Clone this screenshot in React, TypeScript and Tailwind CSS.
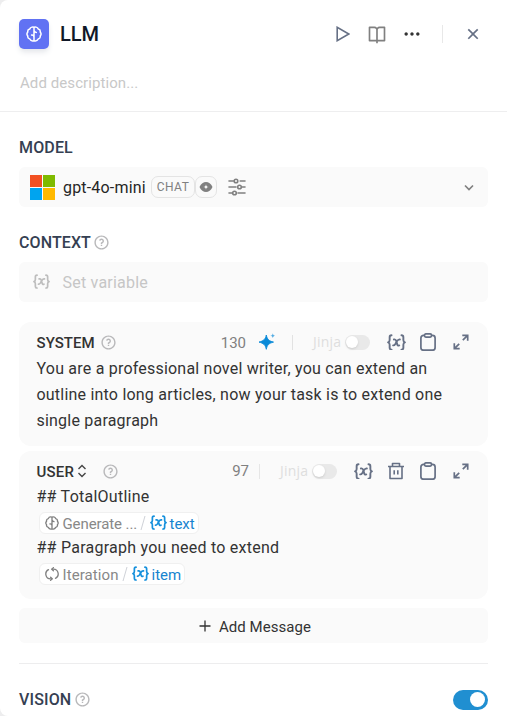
import type { ReactNode } from 'react';
import { RiBookOpenLine, RiMoreFill, RiCloseLine, RiQuestionLine } from 'react-icons/ri';

function Brain({ size, className = '' }: { size: number; className?: string }) {
  return (
    <svg width={size} height={size} viewBox="0 0 16 16" fill="none" stroke="currentColor" strokeWidth="1.5" strokeLinecap="round" strokeLinejoin="round" className={`shrink-0 ${className}`}>
      <path d="M8 1.200v13.600M8 1.300C6.200.7 4.300 1.500 3.800 3 2.300 3.400 1.500 4.700 1.800 6 .8 7.200.8 8.900 1.800 10c-.3 1.400.6 2.700 2 3 .7 1.500 2.500 2.200 4.200 1.700M8 1.300c1.800-.6 3.700.2 4.200 1.700 1.500.4 2.300 1.700 2 3 1 1.200 1 2.900 0 4 .3 1.400-.6 2.700-2 3-.7 1.500-2.500 2.200-4.200 1.700M8 4.500c.4 1.200 1.200 1.800 2.300 1.900M8 11c-.1-1.300-.9-2-2.400-1.900" />
    </svg>
  );
}

function Variable({ size, className = '' }: { size: number; className?: string }) {
  return (
    <svg width={size} height={(size * 16) / 18} viewBox="0 0 18 16" fill="none" stroke="currentColor" strokeWidth="1.8" strokeLinecap="round" strokeLinejoin="round" className={`shrink-0 ${className}`}>
      <path d="M4.300 1.200C2.900 1.200 2.500 1.800 2.500 3v2.800C2.500 7.200 2 7.800 1 8c1 .2 1.500.8 1.500 2.200V13c0 1.200.4 1.800 1.800 1.800M13.700 1.200c1.400 0 1.800.6 1.800 1.800v2.800c0 1.400.5 2 1.500 2.200-1 .2-1.500.8-1.500 2.200V13c0 1.200-.4 1.800-1.800 1.800" />
      <path d="M6.500 5.200c1.500-.4 2 .4 2.400 1.800l.7 2.500c.3 1.300.9 1.800 2 1.300M12.200 5.200c-1.300-.4-2 .4-3 1.900L7.900 9.400c-.7 1.100-1.200 1.600-2.100 1.400" />
    </svg>
  );
}

function Clipboard() {
  return (
    <svg width="16" height="18" viewBox="0 0 16 18" fill="none" stroke="currentColor" strokeWidth="1.7" strokeLinejoin="round">
      <path d="M4.500 2.400H3.600C2 2.400.9 3.400.9 5v9.500c0 1.700 1 2.700 2.700 2.700h8.800c1.700 0 2.700-1 2.700-2.700V5c0-1.600-1.100-2.600-2.700-2.600h-.9" />
      <rect x="4.500" y=".85" width="7" height="3.300" rx="1.300" />
    </svg>
  );
}

function Trash() {
  return (
    <svg width="18" height="18" viewBox="0 0 18 18" fill="none" stroke="currentColor" strokeWidth="1.6" strokeLinejoin="round">
      <path d="M1 4.500h16M3 4.500v12h12v-12M5.500 4.500V1.500h7v3M7.200 8.200v4.300M10.800 8.200v4.300" />
    </svg>
  );
}

function Expand() {
  return (
    <svg width="16" height="16" viewBox="0 0 16 16" fill="none" stroke="currentColor" strokeWidth="1.700">
      <path d="M9.300 1.300h5.400v5.400M14.400 1.600 9.800 6.200M6.700 14.700H1.300V9.300M1.600 14.400l4.600-4.600" />
    </svg>
  );
}

function Sparkle() {
  return (
    <svg width="18" height="18" viewBox="0 0 18 18" fill="#0a8ad8">
      <path d="M8.300 2c.9 4.300 2.500 5.900 7.200 7.100C10.800 10.300 9.200 12 8.300 16.300 7.400 12 5.700 10.300 1 9.100 5.700 7.900 7.400 6.300 8.300 2Z" stroke="#0a8ad8" strokeWidth=".9" strokeLinejoin="round" />
      <path d="M14.800.3c.3 1.600.8 2.100 2.400 2.400-1.600.3-2.100.8-2.400 2.400-.3-1.600-.8-2.100-2.400-2.400 1.600-.3 2.100-.8 2.400-2.400Z" opacity=".7" />
    </svg>
  );
}

function Loop() {
  return (
    <svg width="14" height="14" viewBox="0 0 14 14" fill="none" stroke="#808080" strokeWidth="1.300" strokeLinecap="round" strokeLinejoin="round" className="shrink-0">
      <path d="M7 11.800H5.500A4.800 4.800 0 0 1 3.500 2.700M7 2.200h1.500a4.800 4.800 0 0 1 2 9.100" />
      <path d="M5.600 10.200 7.200 11.800l-1.600 1.600M8.400.6 6.800 2.200l1.600 1.600" />
    </svg>
  );
}

function Help({ className = '' }: { className?: string }) {
  return <RiQuestionLine size={17} className={`shrink-0 text-[#b8b8ba] ${className}`} />;
}

function Jinja() {
  return (
    <div className="flex items-center gap-[3px]">
      <span className="w-[29px] whitespace-nowrap font-['Open_Sans',sans-serif] text-[14px] leading-4 tracking-[0.2px] text-[#dedede]">Jinja</span>
      <span className="flex h-[15px] w-[25px] items-center rounded-full bg-[#e9e9e9] px-[1px]">
        <span className="size-[12px] rounded-full bg-white shadow-sm" />
      </span>
    </div>
  );
}

function Slot({ children, className = '' }: { children: ReactNode; className?: string }) {
  return <button className={`flex h-6 w-6 shrink-0 items-center justify-center text-[#667085] ${className}`}>{children}</button>;
}

function Chip({ icon, source, name, className, sourceClass }: { icon: ReactNode; source: string; name: string; className: string; sourceClass: string }) {
  return (
    <div className={`ml-[2px] flex h-[22px] items-center whitespace-nowrap rounded-[6px] border border-[#f0f0f0] bg-white pl-[5px] text-[15px] leading-5 ${className}`}>
      {icon}
      <span className={`ml-[4px] pt-px text-[#888] ${sourceClass}`}>{source}</span>
      <svg width="6" height="16" viewBox="0 0 6 16" className="ml-[3px] shrink-0" stroke="#cfd2d8"><path d="M5 1 1 15" /></svg>
      <Variable size={17} className="ml-[4px] text-[#1590dc]" />
      <span className="ml-[3px] pt-px text-[#1784cf]">{name}</span>
    </div>
  );
}

export default function App() {
  return (
    <div className="h-[716px] w-[507px] overflow-hidden bg-[#ededee] font-[Roboto,sans-serif]">
      <main className="h-full rounded-l-[8px] bg-white">
        <header className="h-[112px] border-b border-[#eeeeef] px-[19px] pt-[18px]">
          <div className="flex h-8 items-center">
            <div className="flex size-[30px] items-center justify-center rounded-[5px] bg-[#6172f3] text-white shadow-md shadow-gray-200">
              <Brain size={16} />
            </div>
            <h1 className="ml-[11px] text-[20px] font-medium tracking-[-0.1px] text-[#101828]">LLM</h1>
            <div className="ml-auto flex items-center text-[#667085]">
              <svg width="14" height="16" viewBox="0 0 14 16" fill="none" stroke="#667085" strokeWidth="1.600" className="mr-[17px]"><path d="M1.200 1.300v13.400L12.800 8Z" /></svg>
              <RiBookOpenLine size={20} className="mr-[15px] text-[#808080]" />
              <RiMoreFill size={20} className="mr-[20px] text-[#333]" />
              <span className="mr-[20px] h-[18px] w-px bg-[#e8e8e8]" />
              <RiCloseLine size={20} className="mr-[5px]" />
            </div>
          </div>
          <p className="mt-[22px] pl-px text-[15px] leading-[22px] tracking-[0.08px] text-[#c8c8c8]">Add description...</p>
        </header>

        <section className="px-[19px] pt-[25px]">
          <h2 className="h-5 text-[16px] font-medium leading-[22px] tracking-[0.15px] text-[#354052]">MODEL</h2>
          <div className="mt-[10px] flex h-10 items-center rounded-[6px] bg-[#fafafa] pl-[11px] pr-[12px]">
            <div className="grid size-[25px] grid-cols-2 gap-px">
              <span className="bg-[#f25022]" /><span className="bg-[#7fba00]" />
              <span className="bg-[#00a4ef]" /><span className="bg-[#ffb900]" />
            </div>
            <span className="ml-[8px] w-[88px] whitespace-nowrap pt-px text-[16px] tracking-[0.18px] text-[#262626]">gpt-4o-mini</span>
            <span className="flex h-[22px] w-[44px] items-center justify-center rounded-[7px] border border-[#e4e4e4] text-[12px] tracking-[0.45px] text-[#808080]">CHAT</span>
            <span className="flex h-[22px] w-[22px] items-center justify-center rounded-[7px] border border-[#e4e4e4]">
              <svg width="14" height="12" viewBox="0 0 14 12"><path d="M.5 6C3.500-.8 10.500-.8 13.500 6 10.500 12.800 3.500 12.800.5 6Z" fill="#808080" /><path d="M7 3.200c.3 1.900.8 2.500 2.700 2.800-1.900.3-2.400.9-2.700 2.800C6.700 6.900 6.200 6.300 4.300 6c1.900-.3 2.400-.9 2.700-2.800Z" fill="white" /></svg>
            </span>
            <svg width="18" height="18" viewBox="0 0 18 18" fill="none" stroke="#808080" strokeWidth="1.600" strokeLinecap="round" className="ml-[11px]">
              <path d="M1 3h4.500M12.200 3H17M1 9h7M14 9h3M1 15h3M10 15h7" /><circle cx="8" cy="3" r="1.800" /><circle cx="11.500" cy="9" r="1.800" /><circle cx="6.500" cy="15" r="1.800" />
            </svg>
            <svg width="10" height="7" viewBox="0 0 10 7" fill="none" stroke="#808080" strokeWidth="1.700" className="ml-auto mr-[2px]"><path d="m1 1.500 4 4 4-4" /></svg>
          </div>

          <div className="mt-[25px] flex h-5 items-center">
            <h2 className="w-[74px] whitespace-nowrap pt-[2px] text-[16px] font-medium leading-[22px] tracking-[0.1px] text-[#354052]">CONTEXT</h2><Help />
          </div>
          <div className="mt-[10px] flex h-10 items-center rounded-[6px] bg-[#fafafa] pl-[14px]">
            <Variable size={17} className="text-[#bdbdbd]" />
            <span className="ml-[12.5px] pt-px text-[16px] tracking-[0.22px] text-[#c6c6c6]">Set variable</span>
          </div>

          <article className="mt-5 h-[124px] rounded-[12px] bg-[#fafafa] px-[17px] pt-[8px]">
            <div className="flex h-6 items-center">
              <h3 className="w-[64px] pl-[0.5px] pt-[2px] text-[15px] font-medium tracking-[0.05px] text-[#333]">SYSTEM</h3><Help />
              <span className="ml-auto pt-[2px] text-[15px] text-[#808080]">130</span>
              <span className="ml-[12px]"><Sparkle /></span>
              <span className="ml-[16px] mr-[20px] h-[15px] w-px bg-[#e2e2e2]" />
              <Jinja />
              <Slot className="ml-[14px]"><Variable size={19} /></Slot>
              <Slot className="ml-[8px]"><Clipboard /></Slot>
              <Slot className="-mr-[2px] ml-[9px]"><Expand /></Slot>
            </div>
            <p className="mt-[2px] whitespace-nowrap pl-[0.5px] text-[16px] leading-[26px] tracking-[0.21px] text-[#333]">
              You are a professional novel writer, you can extend an<br />outline into long articles, now your task is to extend one<br />single paragraph
            </p>
          </article>

          <article className="mt-[5px] h-[148px] rounded-[12px] bg-[#fafafa] px-[17px] pt-[8px]">
            <div className="flex h-6 items-center">
              <h3 className="w-[41px] pl-[0.5px] pt-[2px] text-[15px] font-medium tracking-[0.2px] text-[#333]">USER</h3>
              <svg width="10" height="14" viewBox="0 0 10 14" fill="none" stroke="#444" strokeWidth="1.400"><path d="m1.500 5 3.500-3.500L8.500 5M1.500 9 5 12.500 8.500 9" /></svg>
              <Help className="ml-[15px]" />
              <span className="ml-auto text-[15px] text-[#808080]">97</span>
              <span className="ml-[10px] mr-[20px] h-[15px] w-px bg-[#e6e6e6]" />
              <Jinja />
              <Slot className="ml-[14px]"><Variable size={19} /></Slot>
              <Slot className="ml-[9px]"><Trash /></Slot>
              <Slot className="ml-[8px]"><Clipboard /></Slot>
              <Slot className="-mr-[2px] ml-[9px]"><Expand /></Slot>
            </div>
            <div className="whitespace-nowrap pl-[0.5px] text-[16px] tracking-[0.25px] text-[#333]">
              <p className="h-[26px] leading-[27px]">## TotalOutline</p>
              <div className="flex h-[26px] items-center pt-[2px] tracking-normal">
                <Chip className="w-[160px]" icon={<Brain size={14} className="text-[#808080]" />} source="Generate ..." sourceClass="w-[74px] tracking-[-0.1px]" name="text" />
              </div>
              <p className="h-[25px] leading-[25px]">## Paragraph you need to extend</p>
              <div className="flex h-[26px] items-center pt-[2px] tracking-normal">
                <Chip className="w-[146px]" icon={<Loop />} source="Iteration" sourceClass="tracking-[0.08px]" name="item" />
              </div>
            </div>
          </article>

          <button className="mt-[9px] flex h-[35px] w-full items-center justify-center rounded-[6px] bg-[#fafafa] pl-[3px] text-[15px] text-[#333]">
            <svg width="12" height="12" viewBox="0 0 12 12" stroke="#333" strokeWidth="1.300" className="mr-[8px]"><path d="M6 .5v11M.5 6h11" /></svg>
            <span className="pt-[3px] tracking-[0.05px]">Add Message</span>
          </button>

          <div className="mt-5 flex h-[72px] items-center border-t border-[#ededee]">
            <h2 className="w-[55px] pt-px text-[16px] font-medium tracking-[0.15px] text-[#354052]">VISION</h2><Help className="-mt-px" />
            <button className="ml-auto flex h-5 w-[35px] items-center justify-end rounded-full bg-[#208fd1] pr-[3px]"><span className="size-[15px] rounded-full bg-white" /></button>
          </div>
        </section>
      </main>
    </div>
  );
}
